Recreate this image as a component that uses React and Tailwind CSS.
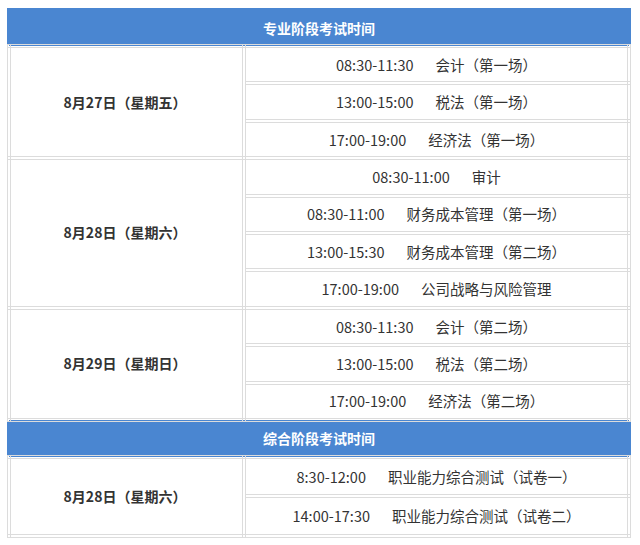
const groups = [
  {
    title: '专业阶段考试时间',
    days: [
      {
        date: '8月27日（星期五）',
        items: [
          ['08:30-11:30', '会计（第一场）'],
          ['13:00-15:00', '税法（第一场）'],
          ['17:00-19:00', '经济法（第一场）'],
        ],
      },
      {
        date: '8月28日（星期六）',
        items: [
          ['08:30-11:00', '审计'],
          ['08:30-11:00', '财务成本管理（第一场）'],
          ['13:00-15:30', '财务成本管理（第二场）'],
          ['17:00-19:00', '公司战略与风险管理'],
        ],
      },
      {
        date: '8月29日（星期日）',
        items: [
          ['08:30-11:30', '会计（第二场）'],
          ['13:00-15:00', '税法（第二场）'],
          ['17:00-19:00', '经济法（第二场）'],
        ],
      },
    ],
  },
  {
    title: '综合阶段考试时间',
    tall: true,
    days: [
      {
        date: '8月28日（星期六）',
        items: [
          ['8:30-12:00', '职业能力综合测试（试卷一）'],
          ['14:00-17:30', '职业能力综合测试（试卷二）'],
        ],
      },
    ],
  },
]

export default function App() {
  return (
    <div
      className="w-[640px] h-[545px] bg-white pt-[8px] pl-[7px] text-[14px] text-[#333]"
      style={{ fontFamily: '"Noto Sans CJK SC", "Noto Sans", sans-serif' }}
    >
      <table className="w-[624px] border-collapse table-fixed">
        <colgroup>
          <col className="w-[235px]" />
          <col />
        </colgroup>
        <tbody>
          {groups.map((group, gi) => (
            <GroupRows key={gi} group={group} />
          ))}
        </tbody>
      </table>
    </div>
  )
}

function GroupRows({ group }) {
  const rowH = group.tall ? 'h-[39.5px]' : 'h-[37.4px]'
  return (
    <>
      <tr className={group.tall ? 'h-[37px]' : 'h-[36px]'}>
        <td
          colSpan={2}
          className="bg-[#4a86d1] border-[4px] border-solid border-[#4a86d1] text-center font-bold text-white p-0"
        >
          {group.title}
        </td>
      </tr>
      {group.days.map((day, di) =>
        day.items.map((item, ii) => (
          <tr key={di + '-' + ii} className={rowH}>
            {ii === 0 && (
              <td
                rowSpan={day.items.length}
                className="border-[4px] border-double border-[#dcdcdc] text-center font-bold p-0 pr-[3px]"
              >
                {day.date}
              </td>
            )}
            <td className="border-[4px] border-double border-[#dcdcdc] p-0">
              <div className="flex justify-center gap-[22px] whitespace-nowrap text-[14.5px]">
                <span>{item[0]}</span>
                <span>{item[1]}</span>
              </div>
            </td>
          </tr>
        ))
      )}
    </>
  )
}
